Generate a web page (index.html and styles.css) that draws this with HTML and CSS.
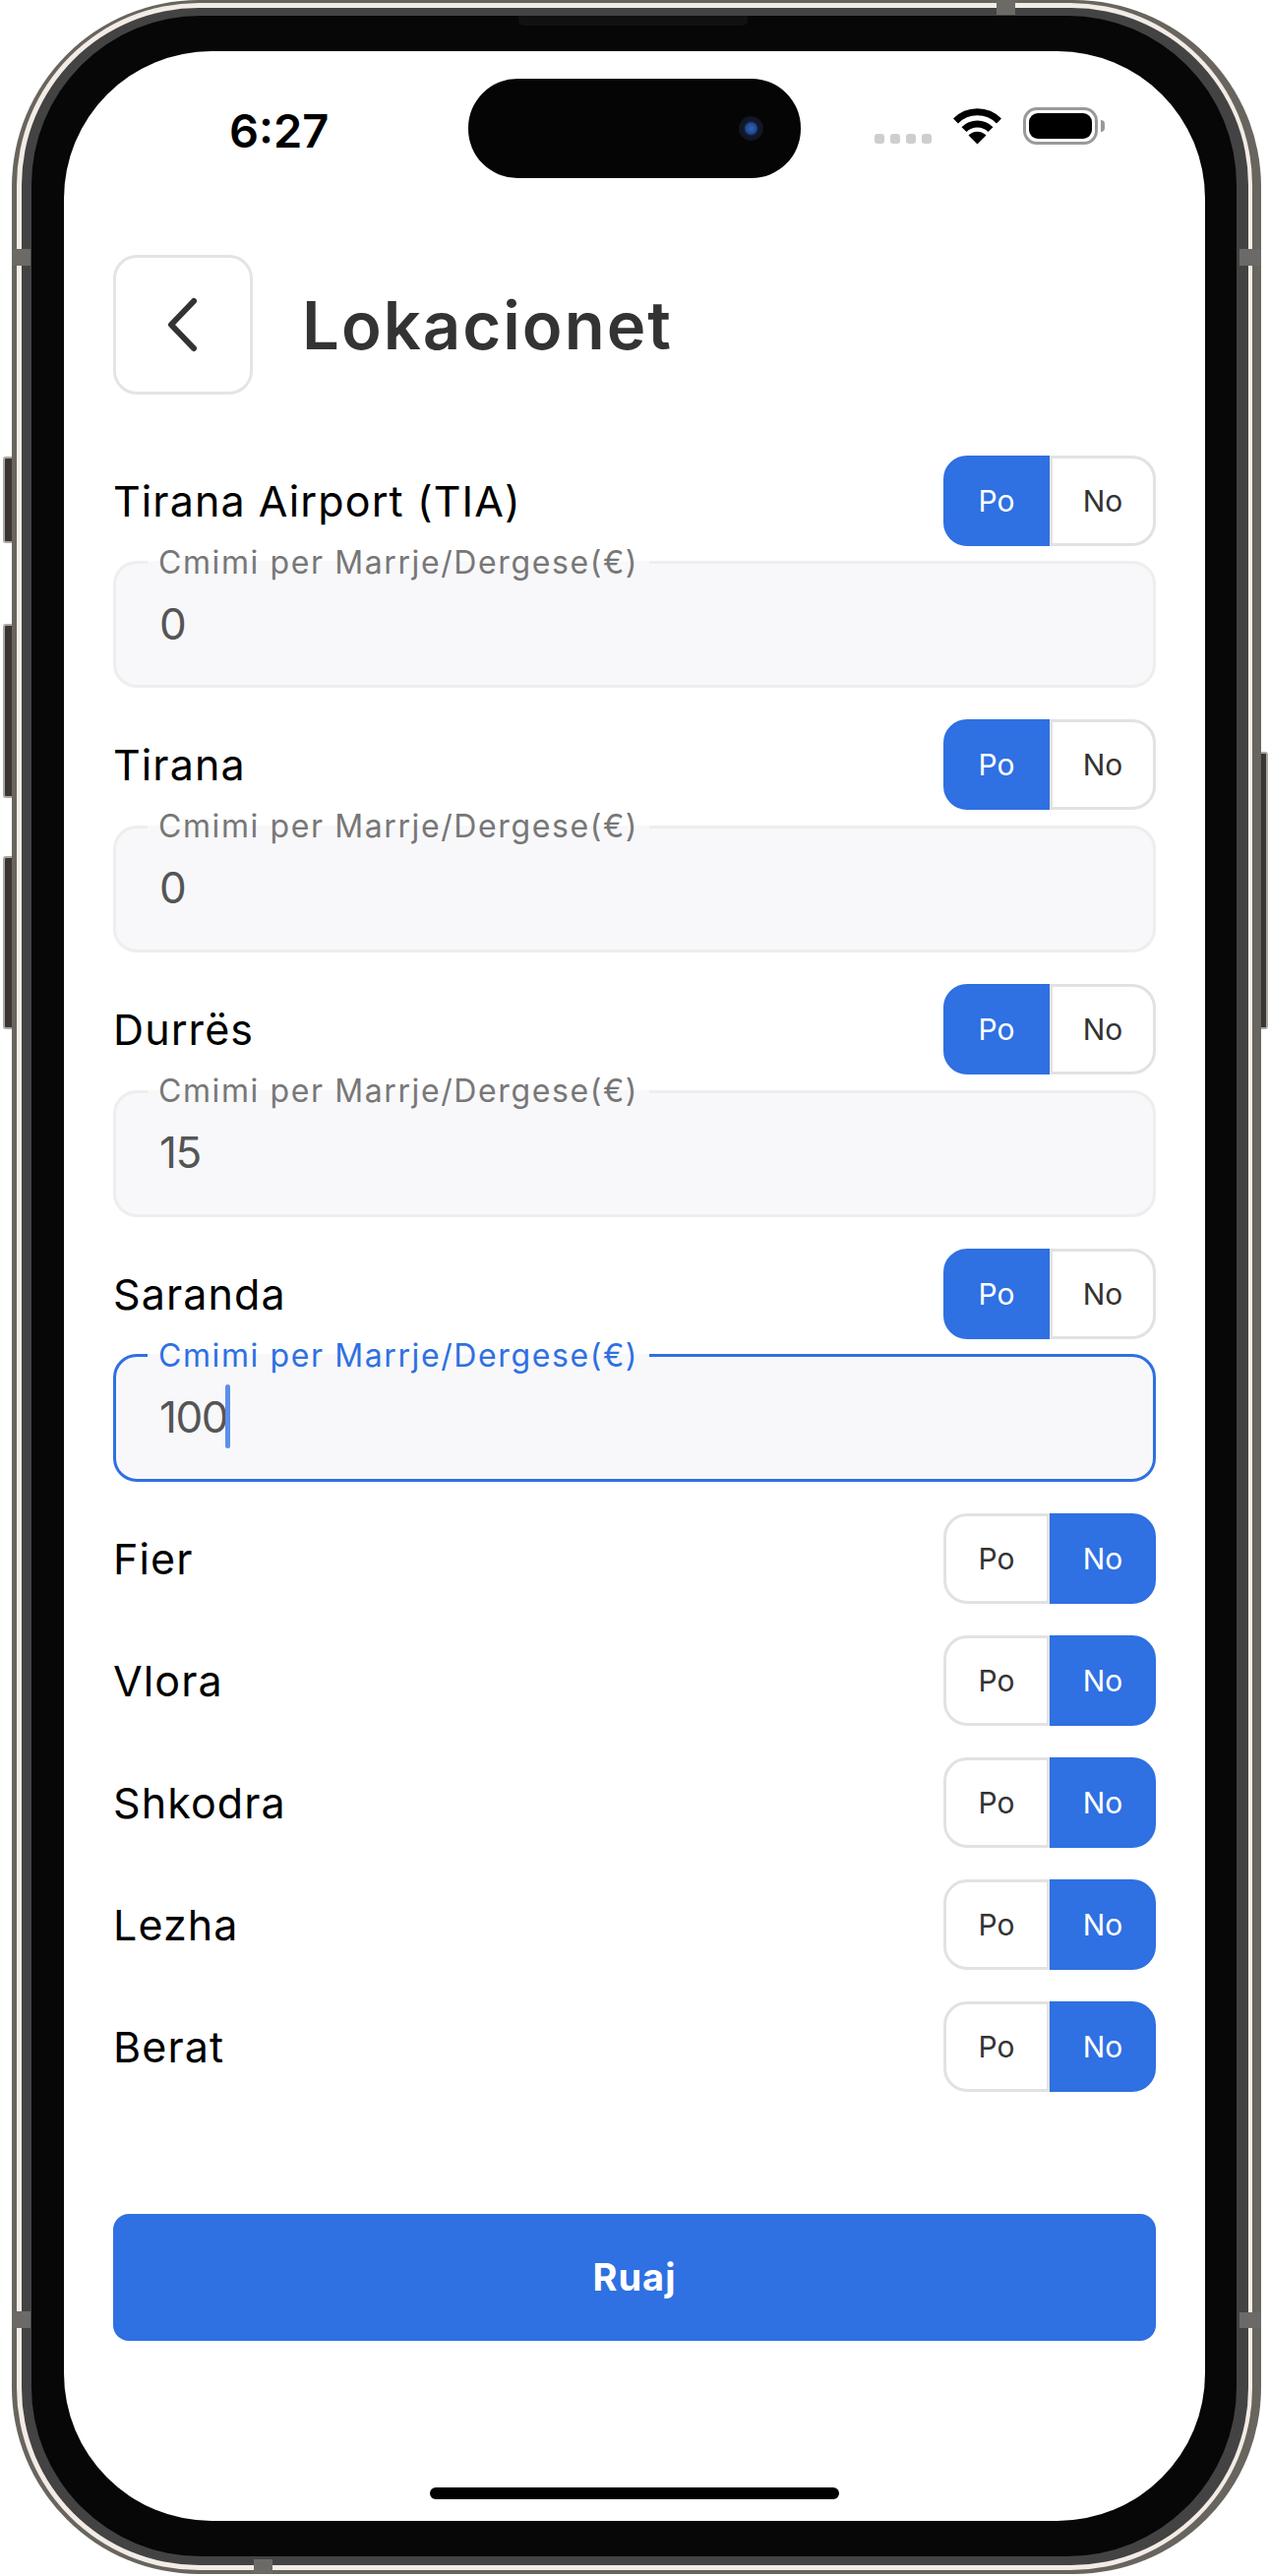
FILE: index.html
```html
<!DOCTYPE html>
<html lang="en">
<head>
  <meta charset="UTF-8" />
  <meta name="viewport" content="width=device-width, initial-scale=1.0"/>
  <title>Lokacionet</title>
  <link rel="stylesheet" href="styles.css">
</head>
<body>
  <div class="phone">
    <!-- side buttons -->
    <span class="side-btn mute"></span>
    <span class="side-btn vol-up"></span>
    <span class="side-btn vol-down"></span>
    <span class="side-btn power"></span>

    <div class="band">
      <div class="rim">
        <div class="inner-rim">
          <div class="bezel">
            <span class="speaker"></span>

            <div class="screen">
              <div class="status-bar">
                <div class="time">6:27</div>
                <div class="island"><span class="camera"></span></div>
                <div class="status-icons">
                  <div class="dots"><i></i><i></i><i></i><i></i></div>
                  <svg class="wifi" width="51" height="38" viewBox="0 0 51 38">
                    <path d="M3.5 14 A31 31 0 0 1 47.5 14" fill="none" stroke="#000" stroke-width="7"/>
                    <path d="M12 22.6 A19 19 0 0 1 39 22.6" fill="none" stroke="#000" stroke-width="7"/>
                    <path d="M25.5 37.5 L16.5 28.5 A12.5 12.5 0 0 1 34.5 28.5 Z" fill="#000"/>
                  </svg>
                  <div class="battery"><span class="battery-level"></span></div>
                  <span class="battery-nub"></span>
                </div>
              </div>

              <div class="content">
                <div class="page-head">
                  <button class="back-btn">
                    <svg width="36" height="56" viewBox="0 0 36 56">
                      <polyline points="29,4 6,28 29,52" fill="none" stroke="#333" stroke-width="6" stroke-linecap="round" stroke-linejoin="round"/>
                    </svg>
                  </button>
                  <h1>Lokacionet</h1>
                </div>

                <div class="locations">
                  <div class="loc">
                    <div class="loc-head">
                      <span class="loc-name">Tirana Airport (TIA)</span>
                      <div class="toggle"><span class="opt on">Po</span><span class="opt">No</span></div>
                    </div>
                    <fieldset class="price">
                      <legend>Cmimi per Marrje/Dergese(€)</legend>
                      <div class="price-value">0</div>
                    </fieldset>
                  </div>

                  <div class="loc">
                    <div class="loc-head">
                      <span class="loc-name">Tirana</span>
                      <div class="toggle"><span class="opt on">Po</span><span class="opt">No</span></div>
                    </div>
                    <fieldset class="price">
                      <legend>Cmimi per Marrje/Dergese(€)</legend>
                      <div class="price-value">0</div>
                    </fieldset>
                  </div>

                  <div class="loc">
                    <div class="loc-head">
                      <span class="loc-name">Durrës</span>
                      <div class="toggle"><span class="opt on">Po</span><span class="opt">No</span></div>
                    </div>
                    <fieldset class="price">
                      <legend>Cmimi per Marrje/Dergese(€)</legend>
                      <div class="price-value">15</div>
                    </fieldset>
                  </div>

                  <div class="loc">
                    <div class="loc-head">
                      <span class="loc-name">Saranda</span>
                      <div class="toggle"><span class="opt on">Po</span><span class="opt">No</span></div>
                    </div>
                    <fieldset class="price focused">
                      <legend>Cmimi per Marrje/Dergese(€)</legend>
                      <div class="price-value">100<span class="caret"></span></div>
                    </fieldset>
                  </div>

                  <div class="loc">
                    <div class="loc-head">
                      <span class="loc-name">Fier</span>
                      <div class="toggle"><span class="opt">Po</span><span class="opt on">No</span></div>
                    </div>
                  </div>

                  <div class="loc">
                    <div class="loc-head">
                      <span class="loc-name">Vlora</span>
                      <div class="toggle"><span class="opt">Po</span><span class="opt on">No</span></div>
                    </div>
                  </div>

                  <div class="loc">
                    <div class="loc-head">
                      <span class="loc-name">Shkodra</span>
                      <div class="toggle"><span class="opt">Po</span><span class="opt on">No</span></div>
                    </div>
                  </div>

                  <div class="loc">
                    <div class="loc-head">
                      <span class="loc-name">Lezha</span>
                      <div class="toggle"><span class="opt">Po</span><span class="opt on">No</span></div>
                    </div>
                  </div>

                  <div class="loc">
                    <div class="loc-head">
                      <span class="loc-name">Berat</span>
                      <div class="toggle"><span class="opt">Po</span><span class="opt on">No</span></div>
                    </div>
                  </div>
                </div>

                <button class="save-btn">Ruaj</button>
              </div>

              <div class="home-indicator"></div>
            </div>
          </div>
        </div>
      </div>
    </div>

    <!-- antenna lines on the band -->
    <span class="tick tick-top"></span>
    <span class="tick tick-bottom"></span>
    <span class="tick tick-left-a"></span>
    <span class="tick tick-left-b"></span>
    <span class="tick tick-right-a"></span>
    <span class="tick tick-right-b"></span>
  </div>
</body>
</html>
```

FILE: styles.css
```css
* {
  box-sizing: border-box;
}
html, body {
  margin: 0;
  background: #fff;
}
body {
  font-family: Inter, "Liberation Sans", sans-serif;
  width: 1290px;
  height: 2618px;
  overflow: hidden;
}

/* phone frame, each layer sits in the padding of the one before it */
.phone {
  position: relative;
  width: 1270px;
  height: 2616px;
  margin-left: 12px;
}
.band {
  height: 100%;
  background: #67655d;
  border-radius: 190px;
  padding: 3px 9px 4px 5px;
}
.rim {
  height: 100%;
  background: #f3ebe6;
  border-radius: 185px;
  padding: 5px 4px 5px 5px;
}
.inner-rim {
  height: 100%;
  background: #434343;
  border-radius: 180px;
  padding: 8px 12px 9px 10px;
}
.bezel {
  position: relative;
  height: 100%;
  background: #070707;
  border-radius: 172px;
  padding: 36px 32px 36px 33px;
}
.speaker {
  position: absolute;
  top: 0;
  left: 495px;
  width: 233px;
  height: 10px;
  background: #111;
  border-radius: 0 0 5px 5px;
}
.screen {
  height: 100%;
  background: #fff;
  border-radius: 150px;
  padding-top: 28px;
  overflow: hidden;
}

.side-btn {
  position: absolute;
  background: #3a3532;
  border: 2px solid #a9a7a2;
  border-right: none;
  border-radius: 3px 0 0 3px;
}
.mute { left: -9px; top: 464px; width: 9px; height: 88px; }
.vol-up { left: -9px; top: 634px; width: 9px; height: 177px; }
.vol-down { left: -9px; top: 870px; width: 9px; height: 176px; }
.power {
  left: 1270px;
  top: 764px;
  width: 7px;
  height: 282px;
  border: 2px solid #a9a7a2;
  border-left: none;
  border-radius: 0 3px 3px 0;
}

.tick {
  position: absolute;
  background: #6c6a66;
}
.tick-top { left: 1001px; top: 0; width: 19px; height: 15px; }
.tick-bottom { left: 246px; top: 2601px; width: 19px; height: 15px; }
.tick-left-a { left: 0; top: 253px; width: 19px; height: 17px; }
.tick-left-b { left: 0; top: 2349px; width: 19px; height: 17px; }
.tick-right-a { left: 1248px; top: 253px; width: 22px; height: 17px; }
.tick-right-b { left: 1248px; top: 2350px; width: 22px; height: 16px; }

/* status bar */
.status-bar {
  display: flex;
  height: 101px;
}
.time {
  width: 411px;
  padding: 24px 0 0 168px;
  font-size: 47px;
  line-height: 58px;
  font-weight: 600;
  color: #000;
}
.island {
  position: relative;
  width: 338px;
  height: 101px;
  background: #050505;
  border-radius: 50px;
}
.camera {
  position: absolute;
  left: 275px;
  top: 38px;
  width: 25px;
  height: 25px;
  border-radius: 50%;
  background: radial-gradient(circle, #2f62b8 0, #24498f 30%, #0e1a30 42%, #14141a 75%, #0a0a0a 100%);
}
.status-icons {
  display: flex;
  align-items: flex-start;
  padding: 29px 0 0 75px;
}
.dots {
  display: flex;
  gap: 6px;
  margin-top: 27px;
}
.dots i {
  width: 10px;
  height: 10px;
  background: #cecece;
  border-radius: 3px;
}
.wifi {
  margin-left: 21px;
}
.battery {
  width: 76px;
  height: 38px;
  margin-left: 21px;
  border: 3px solid #999;
  border-radius: 14px;
  padding: 3px;
}
.battery-level {
  display: block;
  height: 100%;
  background: #000;
  border-radius: 9px;
}
.battery-nub {
  width: 4px;
  height: 12px;
  margin: 13px 0 0 3px;
  background: #999;
  border-radius: 0 4px 4px 0;
}

/* page */
.content {
  padding: 78px 50px 0;
}
.page-head {
  display: flex;
  align-items: center;
  gap: 50px;
}
.back-btn {
  display: flex;
  align-items: center;
  justify-content: center;
  width: 142px;
  height: 142px;
  padding: 0;
  background: #fff;
  border: 3px solid #e4e4e4;
  border-radius: 24px;
}
h1 {
  margin: 0;
  font-size: 67px;
  font-weight: 600;
  letter-spacing: 2px;
  color: #333;
}

.locations {
  display: flex;
  flex-direction: column;
  gap: 32px;
  margin-top: 61.5px;
}
.loc-head {
  display: flex;
  align-items: center;
  justify-content: space-between;
  height: 92px;
}
.loc-name {
  font-size: 43px;
  letter-spacing: 1.1px;
  color: #000;
}
.toggle {
  display: flex;
  width: 216px;
  height: 92px;
}
.opt {
  flex: 1;
  display: flex;
  align-items: center;
  justify-content: center;
  font-size: 30px;
  color: #333;
  background: #fff;
  border: 3px solid #e2e2e2;
}
.opt:first-child {
  border-radius: 24px 0 0 24px;
}
.opt:last-child {
  border-radius: 0 24px 24px 0;
}
.opt.on {
  background: #2f70e2;
  border-color: #2f70e2;
  color: #fff;
}

fieldset.price {
  margin: 2px 0 0;
  padding: 0 0 0 26px;
  background: #f8f8fa;
  border: 3px solid #eee;
  border-radius: 24px;
}
.price legend {
  margin-left: 6px;
  padding: 0 11px;
  font-size: 32px;
  line-height: 30px;
  letter-spacing: 1.6px;
  color: #777;
}
.price-value {
  display: flex;
  align-items: center;
  height: 94px;
  margin-bottom: 15.75px;
  padding-left: 18px;
  font-size: 44px;
  letter-spacing: -1.5px;
  color: #555;
}
.price.focused {
  border-color: #2f70e2;
}
.price.focused legend {
  color: #2f70e2;
}
.caret {
  width: 5px;
  height: 65px;
  margin: 0 0 0 -2px;
  background: #5d8fea;
  border-radius: 3px;
}

.save-btn {
  display: block;
  width: 100%;
  height: 129px;
  margin-top: 124px;
  background: #2f70e2;
  border: none;
  border-radius: 16px;
  color: #fff;
  font-family: inherit;
  font-size: 38px;
  letter-spacing: 1px;
  font-weight: 700;
}
.home-indicator {
  width: 416px;
  height: 12px;
  margin: 149px auto 0;
  background: #000;
  border-radius: 6px;
}
```
